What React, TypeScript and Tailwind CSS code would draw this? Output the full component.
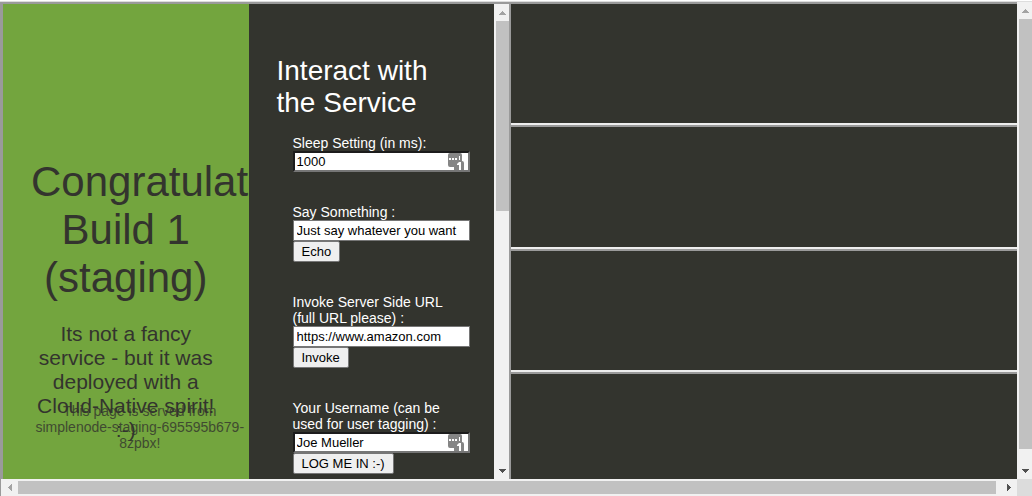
import type { ReactNode } from "react";

type Direction = "up" | "down" | "left" | "right";

const arrowPaths: Record<Direction, string> = {
  up: "M4 0h1v1h1v1h1v1h1v1H1V3h1V2h1V1h1z",
  down: "M1 0h7v1H7v1H6v1H5v1H4V3H3V2H2V1H1z",
  left: "M4 1v7H3V7H2V6H1V5H0V4h1V3h1V2h1V1z",
  right: "M0 1v7h1V7h1V6h1V5h1V4H3V3H2V2H1V1z",
};

function Arrow({ direction, muted }: { direction: Direction; muted?: boolean }) {
  const vertical = direction === "up" || direction === "down";
  return (
    <svg
      width={vertical ? 9 : 4}
      height={vertical ? 4 : 9}
      shapeRendering="crispEdges"
      aria-hidden="true"
      className={muted ? "fill-[#a3a3a3]" : "fill-[#505050]"}
    >
      <path d={arrowPaths[direction]} />
    </svg>
  );
}

function VerticalScrollbar({ thumb }: { thumb: ReactNode }) {
  return (
    <div className="flex w-[15px] shrink-0 flex-col bg-[#f1f1f1] pl-[2px]">
      <div className="flex h-[17px] shrink-0 items-center justify-center">
        <Arrow direction="up" muted />
      </div>
      <div className="min-h-0 flex-1">{thumb}</div>
      <div className="flex h-[17px] shrink-0 items-center justify-center">
        <Arrow direction="down" />
      </div>
    </div>
  );
}

function PasswordBadge() {
  return (
    <svg
      width="17"
      height="17"
      viewBox="0 0 17 17"
      aria-hidden="true"
      className="absolute top-[2px] right-[5px]"
    >
      <path
        d="M2 0h10a2 2 0 0 1 2 2v6a2 2 0 0 1 2 2v7H6v-3H2a2 2 0 0 1-2-2V2a2 2 0 0 1 2-2z"
        fill="#858585"
      />
      <path d="M1 5h2v2H1zM4 5h2v2H4zM7 5h2v2H7zM11 3h1v4h-1z" fill="#fff" />
      <path d="M9 11l2-2h2v8h-2v-5H9z" fill="#fff" />
    </svg>
  );
}

interface FieldProps {
  id: string;
  label: string;
  value: string;
  action?: string;
  badge?: boolean;
}

function Field({ id, label, value, action, badge }: FieldProps) {
  return (
    <div className="flex flex-col items-start">
      <label htmlFor={id} className="pr-4 text-sm leading-4">
        {label}
      </label>
      <div className="relative w-full">
        <input
          id={id}
          type="text"
          defaultValue={value}
          className={
            badge
              ? "block h-[21px] w-full border-2 border-t-[#1c1c1c] border-r-[#767676] border-b-[#767676] border-l-[#1c1c1c] bg-white px-[2px] text-[13px] text-black"
              : "block h-[21px] w-full border border-[#767676] bg-white px-[3px] text-[13px] text-black"
          }
        />
        {badge && <PasswordBadge />}
      </div>
      {action && (
        <button
          type="button"
          className="h-[21px] rounded-xs border border-[#767676] bg-[#efefef] px-2 text-[13px] leading-4 text-black"
        >
          {action}
        </button>
      )}
    </div>
  );
}

function ServiceFrame() {
  return (
    <main className="flex min-w-0 flex-1">
      <div className="grid min-w-0 flex-1 grid-cols-2">
        <section className="relative overflow-hidden bg-[#73a53e] px-7 pt-[154px] text-center">
          <h1 className="text-[42px] leading-12">Congratulations! Build 1 (staging)</h1>
          <p className="mt-5 text-[21px] leading-6">
            Its not a fancy service - but it was deployed with a Cloud-Native spirit! :-)
          </p>
          <footer className="absolute right-0 bottom-7 left-7 text-sm leading-4 opacity-80">
            This page is served from simplenode-staging-695595b679-8zpbx!
          </footer>
        </section>
        <section className="overflow-hidden pt-[51px] pr-6 pl-7 text-white">
          <h2 className="text-[28px] leading-8">Interact with the Service</h2>
          <form className="mt-4 flex flex-col gap-8 pl-4">
            <Field id="sleep" label="Sleep Setting (in ms):" value="1000" badge />
            <Field
              id="say"
              label="Say Something :"
              value="Just say whatever you want"
              action="Echo"
            />
            <Field
              id="url"
              label="Invoke Server Side URL (full URL please) :"
              value="https://www.amazon.com"
              action="Invoke"
            />
            <Field
              id="user"
              label="Your Username (can be used for user tagging) :"
              value="Joe Mueller"
              action="LOG ME IN :-)"
              badge
            />
          </form>
        </section>
      </div>
      <VerticalScrollbar thumb={<div className="h-[43%] bg-[#c1c1c1]" />} />
    </main>
  );
}

function EmptyFrames() {
  return (
    <aside className="grid min-w-0 flex-1 grid-rows-[121fr_124fr_123fr_107fr] border-l-2 border-[#9a9a9a]">
      <div />
      <div className="border-t-2 border-[#9a9a9a] shadow-[0_-2px_0_#eeeeee]" />
      <div className="border-t-2 border-[#9a9a9a] shadow-[0_-2px_0_#eeeeee]" />
      <div className="border-t-2 border-[#9a9a9a] shadow-[0_-2px_0_#eeeeee]" />
    </aside>
  );
}

export default function App() {
  return (
    <div className="flex h-screen flex-col overflow-hidden bg-[#f1f1f1] font-['Liberation_Sans',Arial,sans-serif] text-[#33342e]">
      <div className="h-[2px] shrink-0 border-b border-[#dddddd] bg-white" />
      <div className="flex min-h-0 flex-1">
        <div className="flex min-w-0 flex-1 border-t-2 border-l-3 border-[#9a9a9a] bg-[#33342e]">
          <ServiceFrame />
          <EmptyFrames />
        </div>
        <VerticalScrollbar thumb={<div className="h-[97%] bg-[#c1c1c1]" />} />
      </div>
      <div className="flex h-[17px] shrink-0 border-l border-[#9a9a9a]">
        <div className="flex w-[17px] shrink-0 items-center justify-center">
          <Arrow direction="left" muted />
        </div>
        <div className="my-[2px] flex-1 bg-[#c1c1c1]" />
        <div className="flex w-[21px] shrink-0 items-center justify-center pl-1">
          <Arrow direction="right" />
        </div>
        <div className="w-[15px] shrink-0 bg-[#dcdcdc]" />
      </div>
    </div>
  );
}
